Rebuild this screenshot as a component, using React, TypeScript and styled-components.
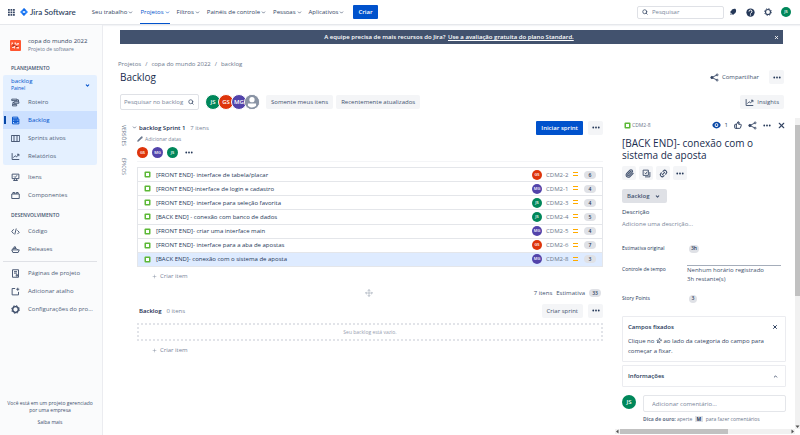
import React from 'react';
import styled, { createGlobalStyle, css } from 'styled-components';
import {
  Search, Paperclip, Link2, ThumbsUp, X, ChevronDown, ChevronUp,
  Pencil, Pin, Move, Plus,
} from 'lucide-react';

const Global = createGlobalStyle`
  * { box-sizing: border-box; }
  body { margin: 0; background: #fff; color: #42526e; font: 6px/8px "Open Sans", "Noto Sans", sans-serif; }
  button, input { font: inherit; color: inherit; margin: 0; padding: 0; border: 0; background: none; }
  button { cursor: pointer; display: inline-flex; align-items: center; justify-content: center; white-space: nowrap; }
  a { color: inherit; text-decoration: none; }
  h1, h2, h3, p, ul { margin: 0; padding: 0; font: inherit; list-style: none; }
  svg { flex: none; display: block; }
`;

const Page = styled.div`
  min-height: 100vh;
  display: flex;
  flex-direction: column;
`;

/* ---------- top bar ---------- */
const TopBar = styled.header`
  height: 25px;
  display: flex;
  align-items: center;
  padding: 0 9px 0 8px;
  border-bottom: 1px solid #e6e8ec;
  box-shadow: 0 1px 1px #f3f4f6;
  color: #344563;
`;
const Brand = styled.a`
  display: flex;
  align-items: center;
  gap: 2px;
  margin: 0 16px 0 5px;
  font: 500 8px/10px "Lato", sans-serif;
  color: #253858;
  white-space: nowrap;
`;
const TopNav = styled.nav`
  display: flex;
  align-self: stretch;
  gap: 7px;
`;
const TopLink = styled.a<{ $on?: boolean }>`
  display: flex;
  align-items: center;
  gap: 1px;
  font-weight: 500;
  white-space: nowrap;
  border: solid transparent;
  border-width: 1px 0;
  ${p => p.$on && css`color: #0052cc; border-bottom-color: #0052cc;`}
`;
const Primary = styled.button`
  height: 14px;
  padding: 0 5px;
  border-radius: 1px;
  background: #0052cc;
  color: #fff;
  font-weight: 600;
`;
const CreateTop = styled(Primary)`
  margin-left: 9px;
`;
const TopSearch = styled.label`
  display: flex;
  align-items: center;
  gap: 4px;
  width: 87px;
  height: 13px;
  margin-left: auto;
  padding: 0 4px;
  border: 1px solid #dfe1e6;
  border-radius: 2px;
`;
const BareInput = styled.input`
  flex: 1;
  min-width: 0;
  outline: 0;
  &::placeholder { color: #7a869a; opacity: 1; }
`;
const TopTools = styled.div`
  display: flex;
  align-items: center;
  gap: 9px;
  margin-left: 5px;
`;

const Avatar = styled.span<{ $c: string; $s?: number; $ring?: boolean }>`
  flex: none;
  display: inline-flex;
  align-items: center;
  justify-content: center;
  width: ${p => p.$s || 10}px;
  height: ${p => p.$s || 10}px;
  border-radius: 50%;
  background: ${p => p.$c};
  color: #fff;
  font-size: ${p => ((p.$s || 10) > 12 ? 6 : 4)}px;
  font-weight: 600;
  ${p => p.$ring && css`border: 1px solid #fff; margin-right: -3px;`}
`;

const Body = styled.div`
  flex: 1;
  display: flex;
`;

/* ---------- sidebar ---------- */
const Side = styled.aside`
  flex: none;
  width: 103px;
  display: flex;
  flex-direction: column;
  padding: 12px 5px 9px 3px;
  background: #fafbfc;
  border-right: 1px solid #ebecf0;
`;
const Project = styled.div`
  display: flex;
  align-items: center;
  gap: 7px;
  padding: 0 7px;
  white-space: nowrap;
  strong { display: block; font-weight: 500; color: #344563; }
  small { display: block; font-size: 5px; color: #6b778c; }
`;
const SideHead = styled.h2<{ $top: number }>`
  padding: 0 8px;
  margin-top: ${p => p.$top}px;
  font-size: 5px;
  font-weight: 600;
  color: #42526e;
`;
const BoardGroup = styled.div`
  margin-top: 3px;
  border-radius: 2px;
  background: #e4f0ff;
`;
const GroupHead = styled.button`
  width: 100%;
  justify-content: space-between;
  padding: 3px 7px 1px 8px;
  color: #0052cc;
  text-align: left;
  strong { display: block; font-weight: 500; line-height: 7px; }
  small { display: block; font-size: 5px; line-height: 7px; }
`;
const SideItem = styled.a<{ $on?: boolean }>`
  position: relative;
  display: flex;
  align-items: center;
  gap: 8px;
  height: 18px;
  padding: 0 8px;
  white-space: nowrap;
  color: #505f79;
  ${p => p.$on && css`
    background: #cce0ff;
    color: #0052cc;
    &::before { content: ''; position: absolute; left: 1px; top: 5px; width: 2px; height: 8px; background: #0747a6; }
  `}
`;
const SideGroup = styled.div<{ $line?: boolean }>`
  margin-top: 3px;
  ${p => p.$line && css`border-top: 1px solid #dfe1e6; padding-top: 2px;`}
`;
const SideFoot = styled.footer`
  margin-top: auto;
  text-align: center;
  font-size: 5px;
  line-height: 7px;
  a { display: block; margin-top: 5px; }
`;

/* ---------- main column ---------- */
const Main = styled.main`
  flex: 1;
  min-width: 0;
  display: flex;
  flex-direction: column;
  padding: 5px 0 0 17px;
`;
const Banner = styled.div`
  display: flex;
  align-items: center;
  height: 14px;
  margin-right: 17px;
  padding: 0 4px;
  background: #42526e;
  color: #fff;
  font-weight: 600;
  p { flex: 1; text-align: center; }
  a { text-decoration: underline; margin-left: 1px; }
`;
const Crumbs = styled.nav`
  display: flex;
  gap: 4px;
  margin: 16px 0 0 -2px;
  color: #6b778c;
`;
const HeadRow = styled.div<{ $top: number }>`
  display: flex;
  align-items: center;
  margin-top: ${p => p.$top}px;
  padding-right: 16px;
`;
const HeadActions = styled.div`
  display: flex;
  gap: 5px;
`;
const Title = styled.h1`
  flex: 1;
  font-size: 10px;
  line-height: 16px;
  font-weight: 500;
  color: #172b4d;
`;
const Soft = styled.button<{ $plain?: boolean; $w?: number }>`
  height: 14px;
  gap: 3px;
  padding: 0 ${p => (p.$w ? 0 : 5)}px;
  min-width: ${p => p.$w || 0}px;
  border-radius: 2px;
  font-weight: 500;
  background: ${p => (p.$plain ? 'none' : '#f4f5f7')};
  color: #42526e;
`;
const FilterSearch = styled.label`
  display: flex;
  align-items: center;
  width: 79px;
  height: 16px;
  padding: 0 4px 0 3px;
  border: 1px solid #dfe1e6;
  border-radius: 2px;
`;
const People = styled.div`
  display: flex;
  margin: 0 9px 0 6px;
`;
const Filters = styled.div`
  flex: 1;
  display: flex;
  gap: 3px;
`;

const Work = styled.div`
  flex: 1;
  display: flex;
  padding-bottom: 1px;
`;
const Rail = styled.div`
  flex: none;
  width: 17px;
  padding-top: 15px;
  display: flex;
  flex-direction: column;
  gap: 12px;
  button { writing-mode: vertical-rl; width: 8px; font-size: 5px; color: #6b778c; }
`;
const Board = styled.section`
  flex: 1;
  min-width: 0;
  padding-top: 10px;
`;
const SprintHead = styled.div`
  display: flex;
  align-items: center;
  gap: 5px;
  height: 15px;
  padding-left: 2px;
  h2 { font-weight: 600; color: #172b4d; }
  span { flex: 1; color: #7a869a; }
`;
const Toggle = styled.button`
  margin: 0 -3px 0 -8px;
  width: 6px;
`;
const Dates = styled.button`
  gap: 2px;
  color: #7a869a;
  font-size: 5px;
  line-height: 8px;
`;
const SprintPeople = styled.div`
  display: flex;
  align-items: center;
  gap: 4px;
  height: 18px;
  border-bottom: 1px solid #f4f5f7;
  button { margin-left: 3px; }
`;
const Issues = styled.ul`
  display: grid;
  grid-auto-rows: 1fr;
  min-height: 100px;
  margin-top: 5px;
  border: 1px solid #e4e6ea;
  border-bottom: 0;
`;
const Issue = styled.li<{ $on?: boolean }>`
  display: flex;
  align-items: center;
  padding: 0 6px;
  border-bottom: 1px solid #e4e6ea;
  background: ${p => (p.$on ? '#deebff' : '#fff')};
  color: #253858;
  > a { flex: 1; margin-left: 5px; }
`;
const IssueKey = styled.span`
  width: 27px;
  margin-left: 4px;
  color: #6b778c;
`;
const Badge = styled.span`
  display: inline-flex;
  align-items: center;
  justify-content: center;
  height: 8px;
  min-width: 12px;
  padding: 0 3px;
  border-radius: 4px;
  background: #dfe1e6;
  font-size: 5px;
  font-weight: 600;
  color: #253858;
`;
const Points = styled(Badge)`
  margin-left: 5px;
`;
const SmallBadge = styled(Badge)`
  min-width: 8px;
  padding: 0 2px;
  margin-left: 2px;
`;
const Create = styled.button`
  gap: 3px;
  height: 18px;
  padding-left: 15px;
  color: #7a869a;
`;
const Summary = styled.div`
  display: grid;
  grid-template-columns: 1fr auto 1fr;
  align-items: center;
  height: 16px;
  padding-right: 2px;
  margin-bottom: 2px;
  svg { color: #a5adba; }
`;
const Totals = styled.div`
  justify-self: end;
  display: flex;
  align-items: center;
  gap: 4px;
`;
const Empty = styled.div`
  height: 18px;
  margin-top: 5px;
  display: flex;
  align-items: center;
  justify-content: center;
  border: 2px dotted #e2e4e9;
  font-size: 5px;
  color: #97a0af;
`;

/* ---------- issue details ---------- */
const Detail = styled.aside`
  flex: none;
  width: 185px;
  margin-left: 12px;
  padding-top: 8px;
  display: grid;
  grid-template-columns: 1fr 5px;
  grid-template-rows: 1fr auto;
`;
const DetailBody = styled.div`
  padding: 0 9px 5px 7px;
  min-width: 0;
`;
const VTrack = styled.div`
  display: flex;
  flex-direction: column;
  align-items: center;
  background: #f1f1f1;
  &::before { content: ''; width: 5px; height: 171px; margin-top: 7px; background: #c1c1c1; }
  svg { margin-top: auto; }
`;
const HTrack = styled.div`
  display: flex;
  align-items: center;
  justify-content: space-between;
  height: 5px;
  background: #f1f1f1;
  &::before { content: ''; order: 1; width: 108px; height: 5px; margin-right: auto; background: #c1c1c1; }
  svg:last-child { order: 2; }
`;
const DetailTop = styled.div`
  display: flex;
  align-items: center;
  height: 14px;
  gap: 6px;
  padding-left: 2px;
`;
const DetailKey = styled.a`
  flex: 1;
  display: flex;
  align-items: center;
  gap: 1px;
  font-size: 5px;
  color: #6b778c;
`;
const Tool = styled.button`
  gap: 4px;
  color: #344563;
`;
const DetailTitle = styled.h2`
  margin-top: 5px;
  font-size: 10px;
  line-height: 12px;
  font-weight: 500;
  color: #172b4d;
`;
const Tools = styled.div`
  display: flex;
  gap: 3px;
  margin-top: 5px;
`;
const Status = styled.button`
  height: 14px;
  margin-top: 9px;
  padding: 0 7px 0 5px;
  gap: 5px;
  border-radius: 2px;
  background: #dfe1e6;
  font-weight: 600;
`;
const Label = styled.h3`
  margin-top: 5px;
  font-weight: 500;
  color: #253858;
`;
const Hint = styled.p`
  margin-top: 4px;
  color: #7a869a;
`;
const Fields = styled.div`
  display: grid;
  grid-template-columns: 65px 1fr;
  margin-top: 16px;
`;
const FieldName = styled.span<{ $h: number }>`
  height: ${p => p.$h}px;
  font-size: 5px;
  font-weight: 500;
  color: #253858;
`;
const FieldValue = styled.div<{ $line?: boolean }>`
  line-height: 9px;
  ${p => p.$line && css`&::before { content: ''; display: block; height: 1px; margin-right: 5px; background: #a5adba; }`}
`;
const Card = styled.section<{ $top: number }>`
  margin-top: ${p => p.$top}px;
  padding: 5px;
  border: 1px solid #ebecf0;
  border-radius: 1px;
  p { margin-top: 4px; line-height: 10px; color: #344563; }
  p svg { display: inline-block; vertical-align: -1px; transform: rotate(45deg); }
`;
const CardHead = styled.div`
  display: flex;
  justify-content: space-between;
  align-items: center;
  padding-right: 2px;
  height: 10px;
  font-weight: 600;
  color: #253858;
`;
const Comment = styled.div`
  display: flex;
  align-items: flex-start;
  gap: 7px;
  margin-top: 8px;
`;
const CommentBox = styled.div`
  flex: 1;
  input { width: 100%; height: 17px; padding: 0 8px; border: 1px solid #e4e6ea; border-radius: 2px; }
  input::placeholder { color: #7a869a; opacity: 1; }
  p { margin-top: 3px; font-size: 5px; line-height: 8px; color: #6b778c; white-space: nowrap; }
  kbd { font: inherit; font-weight: 700; background: #dfe1e6; padding: 0 2px; margin: 0 1px; color: #253858; }
`;

/* ---------- drawings ---------- */
const Apps = () => (
  <svg width="7" height="7" viewBox="0 0 14 14" fill="#344563">
    {[0, 5, 10].map(y => [0, 5, 10].map(x => <rect key={`${x}-${y}`} x={x} y={y} width="3.6" height="3.6" rx=".6" />))}
  </svg>
);
const JiraMark = () => (
  <svg width="8" height="8" viewBox="0 0 16 16">
    <path fill="#2684ff" d="M8 0l8 8-8 8-8-8z" />
    <path fill="#0052cc" d="M8 0l4 4-4 4-2.7-2.7zM8 16l-4-4 4-4 2.7 2.7z" opacity=".55" />
    <path fill="#fff" d="M8 5.3L10.7 8 8 10.7 5.3 8z" />
  </svg>
);
const ProjectMark = () => (
  <svg width="11" height="11" viewBox="0 0 22 22">
    <rect width="22" height="22" rx="2" fill="#ff5630" />
    <path fill="#fff" opacity=".8" d="M3 5h3v3H4v2H3zM9 5h3v3l3-2h3v3h-3v2h-2V9H9zM4 14h3v-2h3v5H8v-1H4zM13 14h5v3h-5z" />
    <path fill="#7a2a2a" d="M7 9h2v3H7zM12 12h3v2h-3zM5 11h2v2H5z" />
  </svg>
);
const Bell = () => (
  <svg width="8" height="8" viewBox="0 0 24 24" fill="#253858">
    <path d="M20 3c-5-2-11 0-13 5L3 12l9 9 4-4c5-2 7-8 4-14zM4 16l4 4c-2 2-5 0-4-4z" />
  </svg>
);
const Help = () => (
  <svg width="9" height="9" viewBox="0 0 24 24">
    <circle cx="12" cy="12" r="11" fill="#253858" />
    <path d="M8 9.5a4 4 0 1 1 5.5 3.5c-1 .5-1.5 1-1.5 2" fill="none" stroke="#fff" strokeWidth="2.6" />
    <circle cx="12" cy="18.5" r="1.6" fill="#fff" />
  </svg>
);
const Gear = ({ s = 8 }: { s?: number }) => (
  <svg width={s} height={s} viewBox="0 0 24 24" fill="none" stroke="#344563">
    <circle cx="12" cy="12" r="7.5" strokeWidth="3.5" />
    <circle cx="12" cy="12" r="10.3" strokeWidth="2.6" strokeDasharray="4 4.09" />
  </svg>
);
const Dots = () => (
  <svg width="8" height="3" viewBox="0 0 16 6" fill="#253858">
    <circle cx="2.5" cy="3" r="1.8" /><circle cx="8" cy="3" r="1.8" /><circle cx="13.5" cy="3" r="1.8" />
  </svg>
);
const Share = () => (
  <svg width="9" height="9" viewBox="0 0 24 24" fill="#344563" stroke="#344563" strokeWidth="2.4">
    <path fill="none" d="M19 5L5 12l14 7" />
    <circle cx="5" cy="12" r="3" /><circle cx="19" cy="5" r="2.4" fill="#fff" /><circle cx="19" cy="19" r="2.4" fill="#fff" />
  </svg>
);
const Eye = () => (
  <svg width="9" height="8" viewBox="0 0 24 20">
    <path fill="#0747a6" d="M12 1c6 0 11 5 11 9s-5 9-11 9S1 14 1 10s5-9 11-9z" />
    <circle cx="12" cy="10" r="5" fill="#fff" /><circle cx="12" cy="10" r="2.6" fill="#0747a6" />
  </svg>
);
const Person = () => (
  <svg width="14" height="14" viewBox="0 0 24 24">
    <circle cx="12" cy="12" r="12" fill="#8993a4" />
    <circle cx="12" cy="8" r="4.5" fill="#fff" /><path fill="#fff" d="M5 14.5h14v4c-4 4-10 4-14 0z" />
  </svg>
);
const Medium = () => (
  <svg width="6" height="5" viewBox="0 0 6 5" fill="#ffab00"><path d="M0 0h5v1H0zM0 3h5v1H0z" /></svg>
);
const Story = () => (
  <svg width="7" height="7" viewBox="0 0 14 14">
    <rect x="1" y="1" width="12" height="12" rx="2" fill="#5cb836" /><rect x="4" y="4" width="6" height="6" fill="#fff" />
  </svg>
);
const Line = ({ d, c = '#42526e', s = 9 }: { d: string; c?: string; s?: number }) => (
  <svg width={s} height={s} viewBox="0 0 24 24" fill="none" stroke={c} strokeWidth="2.5" strokeLinejoin="round"><path d={d} /></svg>
);
const paths = {
  roadmap: 'M2 3h14v4H2zM8 10h13v4H8zM4 17h11v4H4zM16 5h4v5M8 12H5v5',
  backlog: 'M4 3h14v5H4zM4 8h17v6H4zM4 14h17v7H4zM8 11h9M8 17h9',
  columns: 'M1 4h22v16H1zM8 4v16M16 4v16',
  report: 'M3 3v17h19M6 15l5-5 4 3 6-7M16 6h5v5',
  monitor: 'M3 3h18v12H3zM8 9l3 3 5-6M6 20h12M9 15v5M15 15v5',
  box: 'M2 8h20v12H2zM5 8V4h5v4M14 8V4h5v4',
  code: 'M7 6l-5 6 5 6M17 9l5 5-5 5M14 4l-4 16',
  ship: 'M2 13h20l-3 7H5zM5 13V9h9l4 4M8 9V5h4v4',
  page: 'M4 2h16v20H4zM8 7h8M8 11h8M14 15h3v4h-3z',
  addLink: 'M11 4H3v17h17v-8M18 2v8M14 6h8',
  child: 'M3 3h14v14H3zM7 10l3 3 4-6M21 8v13H8',
};
const Tri = ({ d }: { d: string }) => (
  <svg width="5" height="5" viewBox="0 0 10 10" fill="#505050"><path d={d} /></svg>
);

const C: Record<string, string> = { JS: '#00875a', GS: '#de350b', MG: '#5243aa' };

const issues = [
  ['[FRONT END]- interface de tabela/placar', 'GS', 'CDM2-2', 6],
  ['[FRONT END]-interface de login e cadastro', 'MG', 'CDM2-1', 4],
  ['[FRONT END]- interface para seleção favorita', 'JS', 'CDM2-3', 4],
  ['[BACK END] - conexão com banco de dados', 'JS', 'CDM2-4', 5],
  ['[FRONT END]- criar uma interface main', 'MG', 'CDM2-5', 4],
  ['[FRONT END]- interface para a aba de apostas', 'GS', 'CDM2-6', 7],
  ['[BACK END]- conexão com o sistema de aposta', 'MG', 'CDM2-8', 3],
] as const;

const nav = ['Seu trabalho', 'Projetos', 'Filtros', 'Painéis de controle', 'Pessoas', 'Aplicativos'];

export default function App() {
  return (
    <Page>
      <Global />
      <TopBar>
        <button aria-label="Aplicativos Atlassian"><Apps /></button>
        <Brand href="#"><JiraMark />Jira Software</Brand>
        <TopNav>
          {nav.map(n => (
            <TopLink key={n} href="#" $on={n === 'Projetos'}>{n}<ChevronDown size={5} strokeWidth={3} /></TopLink>
          ))}
        </TopNav>
        <CreateTop>Criar</CreateTop>
        <TopSearch><Search size={6} strokeWidth={3} /><BareInput aria-label="Pesquisar" placeholder="Pesquisar" /></TopSearch>
        <TopTools>
          <button aria-label="Notificações"><Bell /></button>
          <button aria-label="Ajuda"><Help /></button>
          <button aria-label="Configurações"><Gear /></button>
          <Avatar $c={C.JS}>JS</Avatar>
        </TopTools>
      </TopBar>
      <Body>
        <Side>
          <Project>
            <ProjectMark />
            <div><strong>copa do mundo 2022</strong><small>Projeto de software</small></div>
          </Project>
          <SideHead $top={11}>PLANEJAMENTO</SideHead>
          <BoardGroup>
            <GroupHead>
              <span><strong>backlog</strong><small>Painel</small></span>
              <ChevronDown size={5} strokeWidth={5} />
            </GroupHead>
            <SideItem href="#"><Line d={paths.roadmap} />Roteiro</SideItem>
            <SideItem href="#" $on><Line d={paths.backlog} c="#0052cc" />Backlog</SideItem>
            <SideItem href="#"><Line d={paths.columns} />Sprints ativos</SideItem>
            <SideItem href="#"><Line d={paths.report} />Relatórios</SideItem>
          </BoardGroup>
          <SideGroup>
            <SideItem href="#"><Line d={paths.monitor} />Itens</SideItem>
            <SideItem href="#"><Line d={paths.box} />Componentes</SideItem>
          </SideGroup>
          <SideHead $top={7}>DESENVOLVIMENTO</SideHead>
          <SideGroup>
            <SideItem href="#"><Line d={paths.code} />Código</SideItem>
            <SideItem href="#"><Line d={paths.ship} />Releases</SideItem>
          </SideGroup>
          <SideGroup $line>
            <SideItem href="#"><Line d={paths.page} />Páginas de projeto</SideItem>
            <SideItem href="#"><Line d={paths.addLink} />Adicionar atalho</SideItem>
            <SideItem href="#"><Gear s={9} />Configurações do pro...</SideItem>
          </SideGroup>
          <SideFoot>
            <p>Você está em um projeto gerenciado por uma empresa</p>
            <a href="#">Saiba mais</a>
          </SideFoot>
        </Side>
        <Main>
          <Banner>
            <p>A equipe precisa de mais recursos do Jira? <a href="#">Use a avaliação gratuita do plano Standard.</a></p>
            <button aria-label="Fechar aviso"><X size={5} strokeWidth={4} /></button>
          </Banner>
          <Crumbs>
            <a href="#">Projetos</a><span>/</span><a href="#">copa do mundo 2022</a><span>/</span><a href="#">backlog</a>
          </Crumbs>
          <HeadRow $top={1}>
            <Title>Backlog</Title>
            <HeadActions>
              <Soft $plain><Share />Compartilhar</Soft>
              <Soft $w={15} aria-label="Mais ações"><Dots /></Soft>
            </HeadActions>
          </HeadRow>
          <HeadRow $top={9}>
            <FilterSearch><BareInput aria-label="Pesquisar no backlog" placeholder="Pesquisar no backlog" /><Search size={6} strokeWidth={3} /></FilterSearch>
            <People>
              {['JS', 'GS', 'MG'].map(n => <Avatar key={n} $c={C[n]} $s={16} $ring>{n}</Avatar>)}
              <Avatar $c="#8993a4" $s={16} $ring><Person /></Avatar>
            </People>
            <Filters>
              <Soft>Somente meus itens</Soft>
              <Soft>Recentemente atualizados</Soft>
            </Filters>
            <Soft><Line d={paths.report} />Insights</Soft>
          </HeadRow>
          <Work>
            <Rail><button>VERSÕES</button><button>ÉPICOS</button></Rail>
            <Board>
              <SprintHead>
                <Toggle aria-label="Recolher sprint"><ChevronDown size={5} strokeWidth={3} /></Toggle>
                <h2>backlog Sprint 1</h2><span>7 itens</span>
                <Primary>Iniciar sprint</Primary>
                <Soft $w={15} aria-label="Mais ações do sprint"><Dots /></Soft>
              </SprintHead>
              <Dates><Pencil size={6} fill="#6b778c" />Adicionar datas</Dates>
              <SprintPeople>
                {['GS', 'MG', 'JS'].map(n => <Avatar key={n} $c={C[n]} $s={11}>{n}</Avatar>)}
                <Tool aria-label="Mais pessoas"><Dots /></Tool>
              </SprintPeople>
              <Issues>
                {issues.map(([t, who, key, pts]) => (
                  <Issue key={key} $on={key === 'CDM2-8'}>
                    <Story /><a href="#">{t}</a>
                    <Avatar $c={C[who]}>{who}</Avatar>
                    <IssueKey>{key}</IssueKey>
                    <Medium />
                    <Points>{pts}</Points>
                  </Issue>
                ))}
              </Issues>
              <Create><Plus size={5} />Criar item</Create>
              <Summary>
                <span /><Move size={8} />
                <Totals><span>7 itens</span><span>Estimativa</span><Badge>33</Badge></Totals>
              </Summary>
              <SprintHead>
                <h2>Backlog</h2><span>0 itens</span>
                <Soft>Criar sprint</Soft>
                <Soft $w={15} aria-label="Mais ações do backlog"><Dots /></Soft>
              </SprintHead>
              <Empty>Seu backlog está vazio.</Empty>
              <Create><Plus size={5} />Criar item</Create>
            </Board>
            <Detail>
              <DetailBody>
                <DetailTop>
                  <DetailKey href="#"><Story />CDM2-8</DetailKey>
                  <Tool aria-label="Observar"><Eye />1</Tool>
                  <Tool aria-label="Votar"><ThumbsUp size={8} strokeWidth={3} /></Tool>
                  <Tool aria-label="Compartilhar item"><Share /></Tool>
                  <Tool aria-label="Mais"><Dots /></Tool>
                  <Tool aria-label="Fechar"><X size={9} strokeWidth={3} /></Tool>
                </DetailTop>
                <DetailTitle>[BACK END]- conexão com o sistema de aposta</DetailTitle>
                <Tools>
                  <Soft $w={14} aria-label="Anexar"><Paperclip size={9} strokeWidth={3} /></Soft>
                  <Soft $w={14} aria-label="Item filho"><Line d={paths.child} /></Soft>
                  <Soft $w={14} aria-label="Vincular"><Link2 size={9} strokeWidth={3} transform="rotate(-45)" /></Soft>
                  <Soft $w={14} aria-label="Mais opções"><Dots /></Soft>
                </Tools>
                <Status>Backlog<ChevronDown size={5} strokeWidth={5} /></Status>
                <Label>Descrição</Label>
                <Hint>Adicione uma descrição...</Hint>
                <Fields>
                  <FieldName $h={21}>Estimativa original</FieldName>
                  <FieldValue><SmallBadge>3h</SmallBadge></FieldValue>
                  <FieldName $h={29}>Controle de tempo</FieldName>
                  <FieldValue $line>Nenhum horário registrado<br />3h restante(s)</FieldValue>
                  <FieldName $h={8}>Story Points</FieldName>
                  <FieldValue><SmallBadge>3</SmallBadge></FieldValue>
                </Fields>
                <Card $top={13}>
                  <CardHead>Campos fixados<Tool aria-label="Dispensar"><X size={6} strokeWidth={4} /></Tool></CardHead>
                  <p>Clique no <Pin size={6} strokeWidth={3} /> ao lado da categoria do campo para começar a fixar.</p>
                </Card>
                <Card $top={3}>
                  <CardHead>Informações<Tool aria-label="Recolher"><ChevronUp size={5} strokeWidth={4} /></Tool></CardHead>
                </Card>
                <Comment>
                  <Avatar $c={C.JS} $s={14}>JS</Avatar>
                  <CommentBox>
                    <input aria-label="Adicionar comentário" placeholder="Adicionar comentário..." />
                    <p><b>Dica de ouro:</b> aperte <kbd>M</kbd> para fazer comentários</p>
                  </CommentBox>
                </Comment>
              </DetailBody>
              <VTrack><Tri d="M1 3h8L5 8z" /></VTrack>
              <HTrack><Tri d="M7 1v8L2 5z" /><Tri d="M3 1v8l5-4z" /></HTrack>
            </Detail>
          </Work>
        </Main>
      </Body>
    </Page>
  );
}
